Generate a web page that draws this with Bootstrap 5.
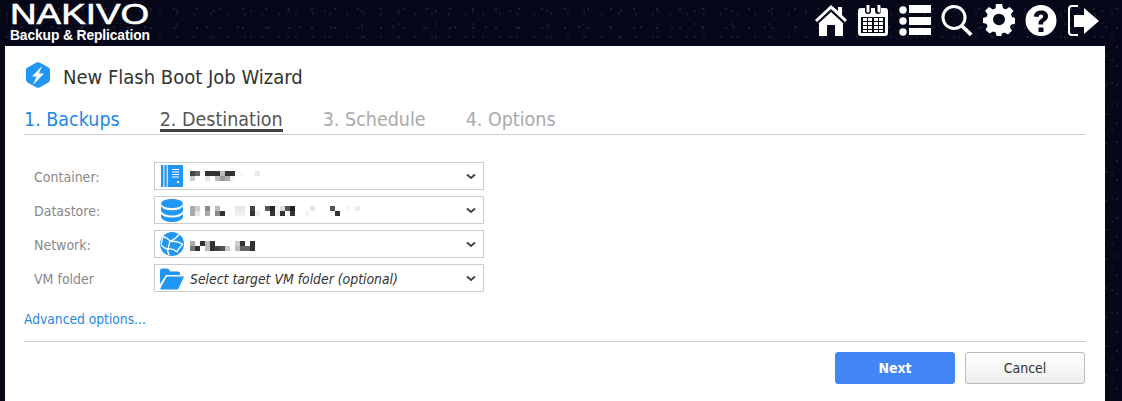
<!DOCTYPE html>
<html lang="en">
<head>
<meta charset="utf-8">
<title>New Flash Boot Job Wizard</title>
<link href="https://cdn.jsdelivr.net/npm/bootstrap@5.3.0/dist/css/bootstrap.min.css" rel="stylesheet">
<style>
html,body{height:100%;}
body{
  margin:0;overflow:hidden;
  font-family:"DejaVu Sans Condensed","DejaVu Sans","Liberation Sans",sans-serif;
  font-stretch:condensed;
  background-color:#060819;
  background-image:
    radial-gradient(circle at 13px 9px,#23263f 0,#23263f .6px,transparent 1px),
    radial-gradient(circle at 21px 27px,#1c1f38 0,#1c1f38 .7px,transparent 1px),
    radial-gradient(circle at 7px 14px,#181b32 0,#181b32 .7px,transparent 1px),
    radial-gradient(circle at 29px 11px,#1f223b 0,#1f223b .6px,transparent 1px);
  background-size:23px 19px,31px 29px,17px 23px,37px 13px;
}
.top-strip{height:46px;padding:0 23px 0 10px;}
.brand-mark{color:#fff;width:142px;}
.brand-name{font-family:"Liberation Sans",sans-serif;font-stretch:normal;font-size:29px;height:28px;line-height:28px;-webkit-text-stroke:.6px #fff;white-space:nowrap;transform:scaleX(1.27);transform-origin:left center;}
.brand-sub{font-family:"Liberation Sans",sans-serif;font-stretch:normal;font-weight:700;font-size:13.8px;height:15px;line-height:15px;letter-spacing:-.1px;white-space:nowrap;}
.top-icons{gap:10px;}
.top-icons svg{display:block;width:32px;height:32px;fill:#fff;}
.wizard-panel{margin:0 17px 0 5px;height:355px;background:#fff;padding:16px 19px 0;}
.wizard-title{height:26px;font-size:20px;color:#333;gap:12px;padding-left:1px;}
.wizard-title svg{width:26px;height:26px;display:block;}
.wizard-title span{padding-top:3px;}
.wizard-tabs{margin-top:11px;height:36px;border-bottom:1px solid #ccc;gap:40px;font-size:19.5px;}
.wizard-tab{height:35px;line-height:42px;color:#aaa;}
.wizard-tab.is-done{color:#1e88e5;}
.wizard-tab.is-current{color:#555;border-bottom:3px solid #444;height:33px;}
.field-stack{margin-top:27px;gap:6px;}
.field-row{height:28px;}
.field-label{width:130px;padding:2px 0 0 10px;font-size:14px;color:#888;}
.picker{width:330px;height:28px;border:1px solid #ccc;padding:0 0 0 5px;gap:6px;font-size:13.85px;color:#333;}
.picker>svg.pick-icon{width:24px;height:24px;flex:none;display:block;fill:#2196f3;}
.picker>svg.blur-text{width:175px;height:14px;display:block;flex:none;}
.picker>.picker-arrow{margin-left:auto;margin-right:7px;width:10px;height:7px;flex:none;display:block;}
.picker em{font-style:italic;white-space:nowrap;padding-top:2px;}
.adv-link{display:block;margin-top:17px;font-size:13.7px;color:#1e88e5;text-decoration:none;line-height:20px;}
.wizard-rule{height:1px;background:#ccc;margin-top:12px;}
.wizard-actions{margin-top:10px;gap:10px;padding-right:1px;}
.act-btn{width:120px;height:32px;padding:0;font-size:14px;border-radius:3px;}
.act-next{background:#4285f4;border:1px solid #4285f4;color:#fff;font-weight:700;}
.act-cancel{background:linear-gradient(#fff,#eee);border:1px solid #bbb;color:#333;}
</style>
</head>
<body>
<header class="top-strip d-flex justify-content-between align-items-start">
  <div class="brand-mark">
    <div class="brand-name">NAKIVO</div>
    <div class="brand-sub">Backup &amp; Replication</div>
  </div>
  <nav class="top-icons d-flex pt-1">
    <svg viewBox="0 0 32 32"><path d="M16 1 23 7V3h4v8l5 5-2 2L16 5 2 18l-2-2z"/><path d="M16 8 28 19v13h-8V21h-8v11H4V19z"/></svg>
    <svg viewBox="0 0 32 32"><path fill-rule="evenodd" d="M4 4h4v3a3 3 0 0 0 6 0V4h4v3a3 3 0 0 0 6 0V4h4a3 3 0 0 1 3 3v22a3 3 0 0 1-3 3H4a3 3 0 0 1-3-3V7a3 3 0 0 1 3-3zM4 13v16h24V13z"/><path d="M9.500 1h2a1 1 0 0 1 1 1v5a1.500 1.500 0 0 1-3 0zM20.500 1h2a1 1 0 0 1 1 1v5a1.500 1.500 0 0 1-3 0z"/><path d="M6 14h4v3H6zM11 14h4v3h-4zM17 14h4v3h-4zM22 14h4v3h-4zM6 18h4v3H6zM11 18h4v3h-4zM17 18h4v3h-4zM22 18h4v3h-4zM6 22h4v3H6zM11 22h4v3h-4zM17 22h4v3h-4zM22 22h4v3h-4zM6 26h4v2H6zM11 26h4v2h-4zM17 26h4v2h-4zM22 26h4v2h-4z"/></svg>
    <svg viewBox="0 0 32 32"><circle cx="4" cy="6" r="3.700"/><circle cx="4" cy="17" r="3.700"/><circle cx="4" cy="28" r="3.700"/><path d="M10 1h22v8H10zM10 13h22v8H10zM10 24h22v7H10z"/></svg>
    <svg viewBox="0 0 32 32"><path fill-rule="evenodd" d="M13 1a12.500 12.500 0 0 1 9.800 20.200l8.700 8.300-2.600 2.700-8.700-8.500A12.500 12.500 0 1 1 13 1zm0 3a9.500 9.500 0 1 0 0 19 9.500 9.500 0 0 0 0-19z"/></svg>
    <svg viewBox="0 0 32 32"><path fill-rule="evenodd" d="M13 1h6l1 4.500 2.700 1.100L26.500 4l4 4-2.600 3.800L29 14.500l3 1v6l-4 .8-1.100 2.700 2.100 3.500-4 4-3.500-2.100-2.700 1.100L18.500 34h-5l-.8-3.500L10 29.400 6.500 31.500l-4-4 2.100-3.500L3.500 21.500 0 20.500v-5l3.500-1 1.100-2.700L2 8l4-4 3.800 2.600 2.700-1.100zM16 11a6 6 0 1 0 0 12 6 6 0 0 0 0-12z" transform="translate(0 -1) scale(1 .97)"/></svg>
    <svg viewBox="0 0 32 32"><path fill-rule="evenodd" d="M16 1a15.500 15.500 0 1 1 0 31 15.500 15.500 0 0 1 0-31zm-2.500 22.500v4.500h5v-4.500zM16 6.500c-4 0-6.700 2.100-7.200 6l4.700.6c.2-1.700 1-2.600 2.500-2.600 1.300 0 2.200.7 2.200 1.800 0 1-.5 1.600-1.800 2.500-2 1.400-2.900 2.600-2.900 4.900v.8h4.600v-.6c0-1.100.4-1.700 1.800-2.600 2-1.300 3.100-2.800 3.100-5 0-3.900-3-5.800-7-5.800z"/></svg>
    <svg viewBox="0 0 32 32"><path d="M11 1H5a4 4 0 0 0-4 4v23a4 4 0 0 0 4 4h6v-2H5a2 2 0 0 1-2-2V5a2 2 0 0 1 2-2h6z"/><path d="M7 11h10V4l15 13-15 13v-7H7z"/></svg>
  </nav>
</header>
<main class="wizard-panel">
  <div class="wizard-title d-flex align-items-center">
    <svg viewBox="0 0 26 26"><path fill="#2196f3" d="M11.500.6a3 3 0 0 1 3 0l9 5a3 3 0 0 1 1.500 2.600v9.600a3 3 0 0 1-1.500 2.600l-9 5a3 3 0 0 1-3 0l-9-5A3 3 0 0 1 1 17.800V8.200a3 3 0 0 1 1.500-2.600z"/><path fill="#fff" d="M17 4 7 14.500h4.500L8 23l11-11.500h-5z"/></svg>
    <span>New Flash Boot Job Wizard</span>
  </div>
  <div class="wizard-tabs d-flex">
    <div class="wizard-tab is-done">1. Backups</div>
    <div class="wizard-tab is-current">2. Destination</div>
    <div class="wizard-tab">3. Schedule</div>
    <div class="wizard-tab">4. Options</div>
  </div>
  <div class="field-stack d-flex flex-column">
    <div class="field-row d-flex align-items-center">
      <label class="field-label">Container:</label>
      <div class="picker d-flex align-items-center">
        <svg class="pick-icon" viewBox="0 0 24 24"><path d="M1 1h2.400v22H1zM4.400 1h2.300v22H4.400z"/><path fill-rule="evenodd" d="M7.700 1H22a1 1 0 0 1 1 1v20a1 1 0 0 1-1 1H7.700zM12 5v1h7V5zm0 2.500v1h7v-1zm0 2.500v1h7v-1zm0 2.500v1h7v-1zm5 4.500v2h2v-2z"/></svg>
        <svg class="blur-text" viewBox="0 0 175 14" shape-rendering="crispEdges"><g fill="#333"><rect x="0" y="2" width="5" height="5" fill="#444"/><rect x="5" y="2" width="5" height="5" fill="#666"/><rect x="15" y="2" width="15" height="5"/><rect x="30" y="2" width="5" height="5" fill="#bbb"/><rect x="35" y="2" width="10" height="5"/><rect x="45" y="2" width="10" height="5" fill="#fafafa"/><rect x="65" y="2" width="5" height="5" fill="#e8e8e8"/><rect x="0" y="7" width="5" height="5" fill="#ccc"/><rect x="15" y="7" width="5" height="5" fill="#e5e5e5"/><rect x="25" y="7" width="5" height="5" fill="#bbb"/><rect x="30" y="7" width="5" height="5" fill="#999"/><rect x="35" y="7" width="5" height="5" fill="#aaa"/><rect x="40" y="7" width="5" height="5" fill="#f5f5f5"/></g></svg>
        <svg class="picker-arrow" viewBox="0 0 10 7"><path d="M1 1.500 5 5 9 1.500" fill="none" stroke="#444" stroke-width="2"/></svg>
      </div>
    </div>
    <div class="field-row d-flex align-items-center">
      <label class="field-label">Datastore:</label>
      <div class="picker d-flex align-items-center">
        <svg class="pick-icon" viewBox="0 0 24 24"><ellipse cx="12" cy="5.500" rx="11" ry="4.500"/><path d="M1 8c1.500 3 6 4.300 11 4.300S21.500 11 23 8v4.500c-1 3.500-6 5-11 5s-10-1.500-11-5z"/><path d="M1 15.500c1.500 3 6 4 11 4s9.500-1 11-4V19c-1 3.500-6 5-11 5S2 22.500 1 19z"/></svg>
        <svg class="blur-text" viewBox="0 0 175 14" shape-rendering="crispEdges"><rect x="0" y="3" width="5" height="5" fill="#aaa"/><rect x="5" y="3" width="5" height="5" fill="#ccc"/><rect x="15" y="3" width="5" height="5" fill="#888"/><rect x="25" y="3" width="5" height="5" fill="#bbb"/><rect x="45" y="3" width="10" height="5" fill="#e8e8e8"/><rect x="60" y="3" width="5" height="5" fill="#444"/><rect x="75" y="3" width="5" height="5" fill="#555"/><rect x="80" y="3" width="5" height="5" fill="#222"/><rect x="85" y="3" width="5" height="5" fill="#f5f5f5"/><rect x="90" y="3" width="5" height="5" fill="#ddd"/><rect x="95" y="3" width="5" height="5" fill="#555"/><rect x="100" y="3" width="5" height="5" fill="#222"/><rect x="120" y="3" width="5" height="5" fill="#e5e5e5"/><rect x="140" y="3" width="5" height="5" fill="#555"/><rect x="155" y="3" width="5" height="5" fill="#f5f5f5"/><rect x="165" y="3" width="5" height="5" fill="#eee"/><rect x="0" y="8" width="5" height="5" fill="#aaa"/><rect x="5" y="8" width="5" height="5" fill="#e8e8e8"/><rect x="15" y="8" width="5" height="5" fill="#aaa"/><rect x="25" y="8" width="5" height="5" fill="#888"/><rect x="30" y="8" width="5" height="5" fill="#333"/><rect x="45" y="8" width="5" height="5" fill="#eee"/><rect x="50" y="8" width="5" height="5" fill="#f0f0f0"/><rect x="60" y="8" width="5" height="5" fill="#333"/><rect x="65" y="8" width="5" height="5" fill="#eee"/><rect x="80" y="8" width="5" height="5" fill="#333"/><rect x="85" y="8" width="5" height="5" fill="#eee"/><rect x="90" y="8" width="5" height="5" fill="#333"/><rect x="100" y="8" width="5" height="5" fill="#333"/><rect x="115" y="8" width="5" height="5" fill="#f5f5f5"/><rect x="145" y="8" width="5" height="5" fill="#333"/></svg>
        <svg class="picker-arrow" viewBox="0 0 10 7"><path d="M1 1.500 5 5 9 1.500" fill="none" stroke="#444" stroke-width="2"/></svg>
      </div>
    </div>
    <div class="field-row d-flex align-items-center">
      <label class="field-label">Network:</label>
      <div class="picker d-flex align-items-center">
        <svg class="pick-icon" viewBox="0 0 24 24"><circle cx="12" cy="12" r="12"/><path d="M3 4.500C6 5 8 7 10 9c3-.5 6-3 9-6.500M10 9l-2 8M10 9c4 0 8 .5 13 3M8 17c3-.5 6 0 9 3M8 17c-1 2 0 4 1 6M8 17c-3 0-5-2-7-4M17 20c1-3 3-5 6-8M3 4.500c-1 3-1 5-2 8" fill="none" stroke="#fff" stroke-width="1.300"/></svg>
        <svg class="blur-text" viewBox="0 0 175 14" shape-rendering="crispEdges"><rect x="0" y="4" width="5" height="5" fill="#aaa"/><rect x="10" y="4" width="5" height="5" fill="#333"/><rect x="15" y="4" width="5" height="5" fill="#bbb"/><rect x="20" y="4" width="5" height="5" fill="#333"/><rect x="45" y="4" width="5" height="5" fill="#ccc"/><rect x="50" y="4" width="5" height="5" fill="#333"/><rect x="60" y="4" width="5" height="5" fill="#333"/><rect x="0" y="9" width="5" height="5" fill="#777"/><rect x="5" y="9" width="5" height="5" fill="#333"/><rect x="15" y="9" width="5" height="5" fill="#bbb"/><rect x="20" y="9" width="5" height="5" fill="#333"/><rect x="25" y="9" width="5" height="5" fill="#444"/><rect x="30" y="9" width="5" height="5" fill="#555"/><rect x="35" y="9" width="5" height="5" fill="#ccc"/><rect x="45" y="9" width="5" height="5" fill="#bbb"/><rect x="50" y="9" width="10" height="5" fill="#666"/><rect x="60" y="9" width="5" height="5" fill="#333"/></svg>
        <svg class="picker-arrow" viewBox="0 0 10 7"><path d="M1 1.500 5 5 9 1.500" fill="none" stroke="#444" stroke-width="2"/></svg>
      </div>
    </div>
    <div class="field-row d-flex align-items-center">
      <label class="field-label">VM folder</label>
      <div class="picker d-flex align-items-center">
        <svg class="pick-icon" viewBox="0 0 24 24"><path d="M0 4.500A2 2 0 0 1 2 2.500h6l2.500 3H18a2 2 0 0 1 2 2V9H6L0 18z"/><path d="M6.800 10.500H24l-5.500 12a1.500 1.500 0 0 1-1.300 1H1.500a1 1 0 0 1-1-1.500z"/></svg>
        <em>Select target VM folder (optional)</em>
        <svg class="picker-arrow" viewBox="0 0 10 7"><path d="M1 1.500 5 5 9 1.500" fill="none" stroke="#444" stroke-width="2"/></svg>
      </div>
    </div>
  </div>
  <a class="adv-link" href="#">Advanced options...</a>
  <div class="wizard-rule"></div>
  <div class="wizard-actions d-flex justify-content-end">
    <button type="button" class="btn act-btn act-next">Next</button>
    <button type="button" class="btn act-btn act-cancel">Cancel</button>
  </div>
</main>
<script src="https://cdn.jsdelivr.net/npm/bootstrap@5.3.0/dist/js/bootstrap.bundle.min.js"></script>
</body>
</html>
